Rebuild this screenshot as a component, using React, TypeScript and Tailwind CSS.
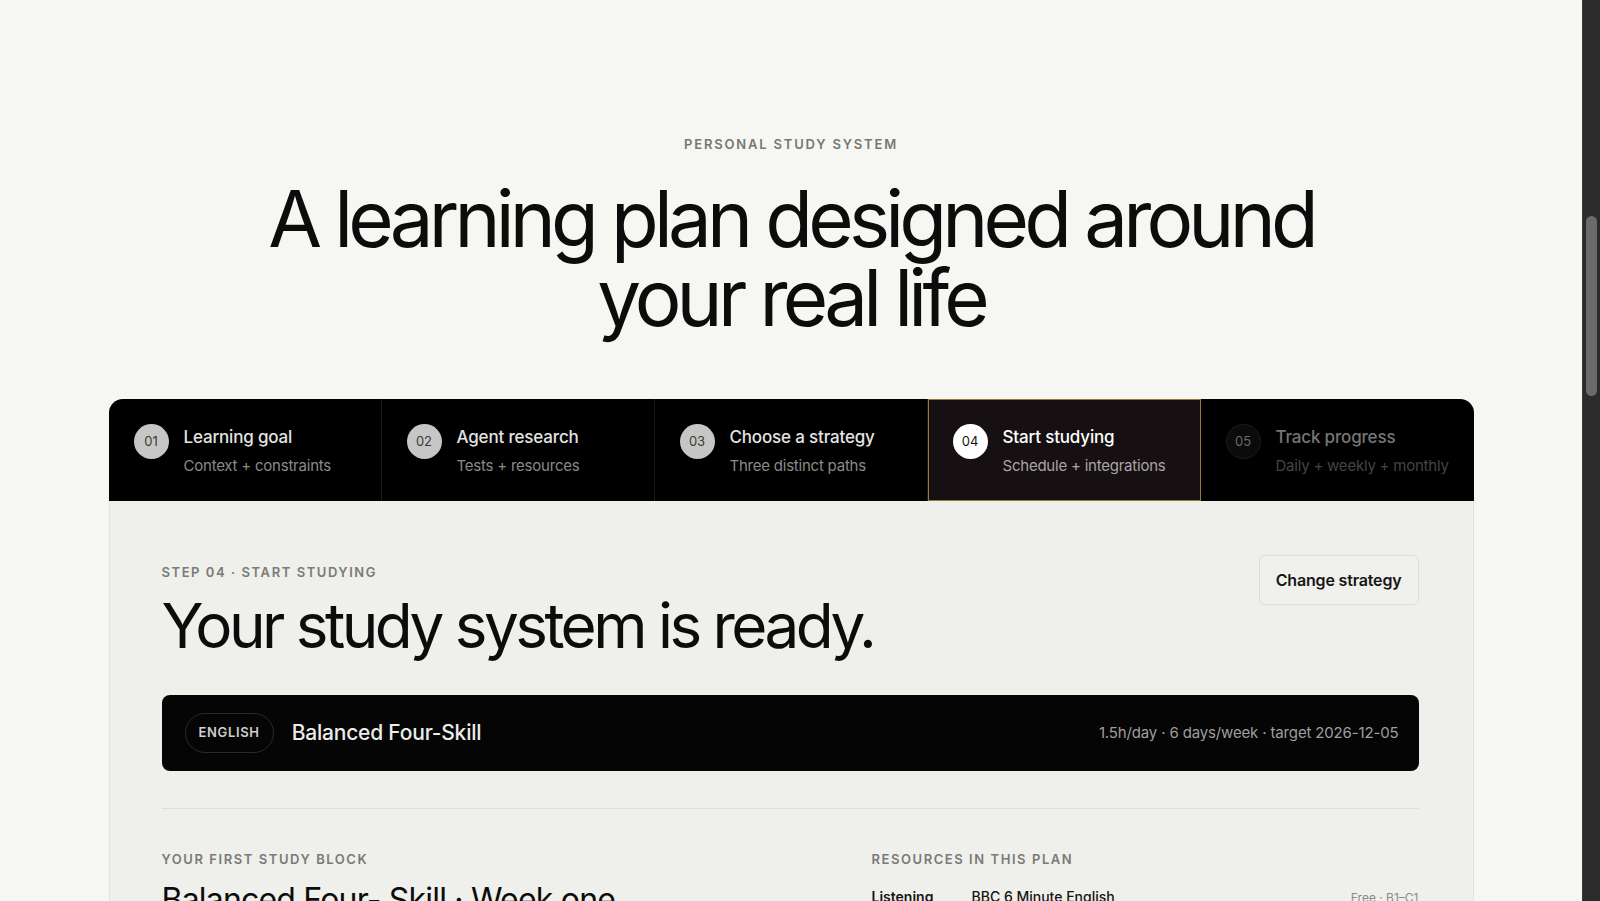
import React from "react"

type Step = {
  num: string
  title: string
  sub: string
  state: "done" | "active" | "todo"
}

const steps: Step[] = [
  { num: "01", title: "Learning goal", sub: "Context + constraints", state: "done" },
  { num: "02", title: "Agent research", sub: "Tests + resources", state: "done" },
  { num: "03", title: "Choose a strategy", sub: "Three distinct paths", state: "done" },
  { num: "04", title: "Start studying", sub: "Schedule + integrations", state: "active" },
  { num: "05", title: "Track progress", sub: "Daily + weekly + monthly", state: "todo" },
]

function StepItem({ step, last }: { step: Step; last: boolean }) {
  const active = step.state === "active"
  const todo = step.state === "todo"
  return (
    <div
      className={
        active
          ? "flex items-start gap-[15px] px-[24px] pt-[24px] bg-[#161012] border border-[#9b7838]"
          : "flex items-start gap-[15px] px-[25px] pt-[25px] " + (last ? "" : "border-r border-[#1a1a1a]")
      }
    >
      <div
        className={
          active
            ? "w-[35px] h-[35px] shrink-0 rounded-full bg-white text-[#151515] flex items-center justify-center text-[13px]"
            : todo
            ? "w-[35px] h-[35px] shrink-0 rounded-full bg-[#0b0b0b] border border-[#1c1c1c] text-[#6a6a6a] flex items-center justify-center text-[13px]"
            : "w-[35px] h-[35px] shrink-0 rounded-full bg-[#c6c6c4] text-[#3a3a3a] flex items-center justify-center text-[13px]"
        }
      >
        {step.num}
      </div>
      <div className="pt-[2px] whitespace-nowrap">
        <div
          className={
            "text-[17px] leading-[22px] font-medium tracking-[-0.01em] " +
            (active ? "text-white" : todo ? "text-[#767676]" : "text-[#e4e4e2]")
          }
        >
          {step.title}
        </div>
        <div
          className={
            "mt-[8px] text-[15px] leading-[19px] tracking-[-0.015em] " +
            (active ? "text-[#a8a6a6]" : todo ? "text-[#444444]" : "text-[#8a8a8a]")
          }
        >
          {step.sub}
        </div>
      </div>
    </div>
  )
}

export default function App() {
  return (
    <div className="flex h-screen overflow-hidden font-['Inter',sans-serif]">
      <main className="flex-1 overflow-hidden bg-[#f6f6f2]">
        <div className="pt-[134px] text-center">
          <div className="text-[13px] leading-[20px] font-semibold tracking-[0.14em] text-[#777776]">
            PERSONAL STUDY SYSTEM
          </div>
          <h1 className="mt-[25px] text-[78px] leading-[79px] font-normal tracking-[-0.062em] text-[#0c0c0c]">
            A learning plan designed around
            <br />
            your real life
          </h1>
        </div>

        <div className="w-[1365px] mx-auto mt-[62px]">
          <div className="grid grid-cols-5 h-[102px] bg-black rounded-t-[14px] overflow-hidden">
            {steps.map((s, i) => (
              <StepItem key={s.num} step={s} last={i === steps.length - 1} />
            ))}
          </div>

          <div className="bg-[#efefeb] border-x border-[#e4e4df] pl-[52px] pr-[54px] pt-[54px] pb-[60px]">
            <div className="flex items-start justify-between">
              <div className="pt-[7px]">
                <div className="text-[13px] leading-[20px] font-semibold tracking-[0.12em] text-[#7a7a78]">
                  STEP 04 · START STUDYING
                </div>
                <h2 className="mt-[13px] text-[62px] leading-[62px] font-normal tracking-[-0.057em] text-[#0c0c0c]">
                  Your study system is ready.
                </h2>
              </div>
              <button className="h-[50px] px-[16px] rounded-[6px] border border-[#dcdcd7] bg-[#f0f0ec] text-[16px] font-semibold text-[#161616] tracking-[-0.01em]">
                Change strategy
              </button>
            </div>

            <div className="mt-[38px] h-[76px] rounded-[8px] bg-[#050505] flex items-center justify-between pl-[23px] pr-[20px]">
              <div className="flex items-center gap-[18px]">
                <span className="h-[40px] px-[13px] rounded-full border border-[#2a2a2a] flex items-center text-[13px] font-semibold tracking-[0.05em] text-[#cfcfcf]">
                  ENGLISH
                </span>
                <span className="text-[21px] font-medium tracking-[-0.01em] text-[#ececec]">
                  Balanced Four-Skill
                </span>
              </div>
              <span className="text-[15px] text-[#9e9e9e] tracking-[-0.01em]">
                1.5h/day · 6 days/week · target 2026-12-05
              </span>
            </div>

            <div className="mt-[37px] h-px bg-[#dfdfda]" />

            <div className="mt-[40px] grid grid-cols-[646px_1fr] gap-[64px]">
              <div>
                <div className="text-[13px] leading-[20px] font-semibold tracking-[0.12em] text-[#7a7a78]">
                  YOUR FIRST STUDY BLOCK
                </div>
                <div className="mt-[12px] text-[32px] leading-[38px] tracking-[-0.025em] text-[#0c0c0c]">
                  Balanced Four- Skill · Week one
                </div>
              </div>
              <div>
                <div className="text-[13px] leading-[20px] font-semibold tracking-[0.12em] text-[#7a7a78]">
                  RESOURCES IN THIS PLAN
                </div>
                <div className="mt-[17px] flex items-baseline">
                  <span className="w-[100px] text-[14px] font-semibold text-[#151515]">Listening</span>
                  <span className="flex-1 text-[14px] font-medium text-[#151515]">BBC 6 Minute English</span>
                  <span className="text-[12px] text-[#8a8a88]">Free · B1–C1</span>
                </div>
              </div>
            </div>
          </div>
        </div>
      </main>
      <aside className="w-[18px] shrink-0 bg-[#2b2b2b] border-l border-[#3a3a3a]">
        <div className="mt-[216px] mx-auto w-[11px] h-[180px] rounded-full bg-[#6b6b6b]" />
      </aside>
    </div>
  )
}
